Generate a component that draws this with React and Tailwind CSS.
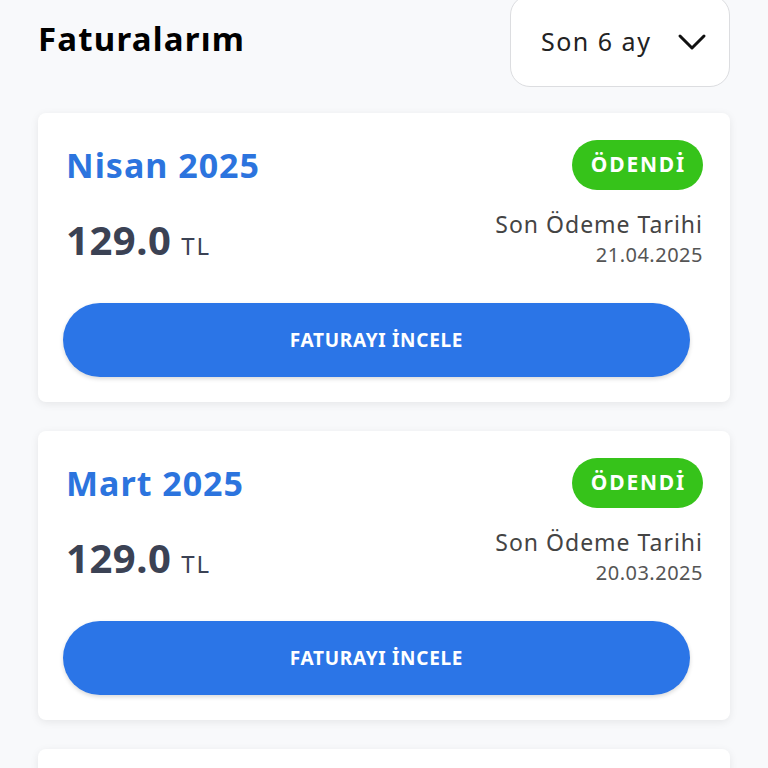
import React from 'react';

const invoices = [
    { month: 'Nisan 2025', amount: '129.0', due: '21.04.2025' },
    { month: 'Mart 2025', amount: '129.0', due: '20.03.2025' },
    { month: 'Şubat 2025', amount: '129.0', due: '20.02.2025' },
];

const InvoiceCard = ({ month, amount, due }) => (
    <div className="bg-white rounded-lg shadow-[0_2px_8px_rgba(0,0,0,0.08)] pt-[27px] pb-[25px] pl-[28px] pr-[27px]">
        <div className="flex items-center justify-between h-[50px]">
            <h2 className="text-[34px] font-bold text-[#2c74de] leading-none tracking-[1px]">{month}</h2>
            <span className="h-[50px] pl-[19px] pr-[17px] flex items-center rounded-full bg-[#36c31a] text-white text-[21px] font-bold tracking-[1.8px]">
                ÖDENDİ
            </span>
        </div>
        <div className="flex items-center justify-between mt-[18px]">
            <div className="flex items-baseline gap-[10px] mt-[6px]">
                <span className="text-[40px] font-bold text-[#3b4254] leading-none tracking-[0.5px]">{amount}</span>
                <span className="text-[24px] text-[#3b4254] tracking-[2px]">TL</span>
            </div>
            <div className="text-right">
                <div className="text-[23px] text-[#444] leading-[32px] tracking-[1px]">Son Ödeme Tarihi</div>
                <div className="text-[20px] text-[#555] leading-[30px] tracking-[0.5px]">{due}</div>
            </div>
        </div>
        <button className="mt-[33px] ml-[-3px] w-[627px] h-[74px] rounded-full bg-[#2b75e7] text-white text-[19px] font-bold tracking-[0.7px] shadow-[0_2px_4px_rgba(0,0,0,0.15)]">
            FATURAYI İNCELE
        </button>
    </div>
);

export default function App() {
    return (
        <div className="h-screen bg-[#f8f9fb] px-[38px] overflow-hidden" style={{ fontFamily: '"Noto Sans", sans-serif' }}>
            <div className="flex items-start justify-between">
                <h1 className="mt-[14px] text-[33px] font-bold text-black tracking-[1.2px]">Faturalarım</h1>
                <div className="mt-[-5px] w-[220px] h-[92px] bg-white border border-[#dcdde0] rounded-[20px] flex items-center justify-between pl-[30px] pr-[22px] pt-[2px]">
                    <span className="text-[25px] text-[#222] tracking-[1.5px]">Son 6 ay</span>
                    <svg width="30" height="20" viewBox="0 0 30 20" fill="none" stroke="#111" strokeWidth="3" strokeLinecap="round" strokeLinejoin="round">
                        <path d="M3 4 L15 16 L27 4" />
                    </svg>
                </div>
            </div>
            <div className="mt-[26px] flex flex-col gap-[29px]">
                {invoices.map((inv) => (
                    <InvoiceCard key={inv.month} {...inv} />
                ))}
            </div>
        </div>
    );
}
